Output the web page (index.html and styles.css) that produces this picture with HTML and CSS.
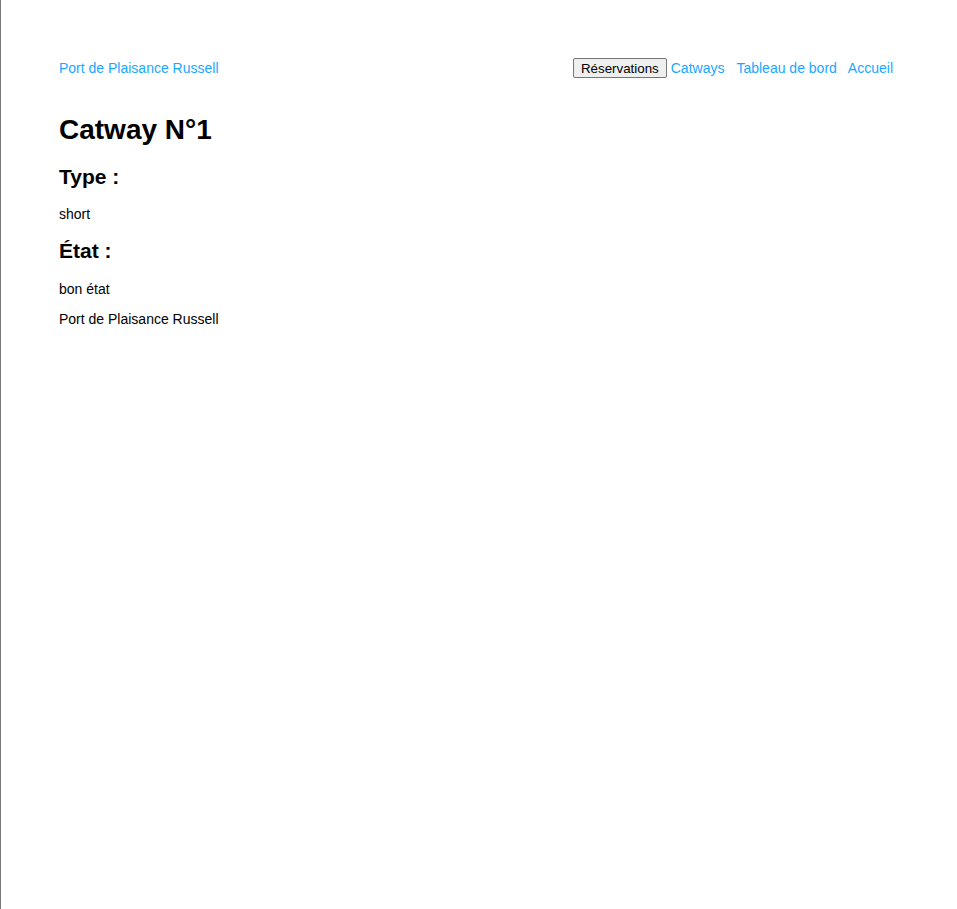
FILE: index.html
```html
<!DOCTYPE html>
<html lang="fr">
<head>
<meta charset="utf-8">
<title>Catway N°1</title>
<link rel="stylesheet" href="styles.css">
</head>
<body>
<div class="page">
  <header class="topbar">
    <a class="brand" href="#">Port de Plaisance Russell</a>
    <nav class="nav">
      <button class="nav-btn" type="button">Réservations</button>
      <a class="nav-link first" href="#">Catways</a>
      <a class="nav-link second" href="#">Tableau de bord</a>
      <a class="nav-link" href="#">Accueil</a>
    </nav>
  </header>
  <main class="content">
    <h1 class="title">Catway N°1</h1>
    <h2 class="label">Type :</h2>
    <p class="value">short</p>
    <h2 class="label">État :</h2>
    <p class="value state">bon état</p>
    <p class="footer">Port de Plaisance Russell</p>
  </main>
</div>
</body>
</html>
```

FILE: styles.css
```css
html, body {
  margin: 0;
  padding: 0;
  height: 100%;
  background: #fff;
}
body {
  border-left: 1px solid #777;
  box-sizing: border-box;
  font-family: "Liberation Sans", Arial, sans-serif;
  font-size: 14px;
  color: #000;
}
.page {
  padding: 0 64px 0 58px;
}
.topbar {
  display: flex;
  justify-content: space-between;
  align-items: center;
  padding-top: 58px;
  height: 20px;
}
.brand, .nav-link {
  color: #1aa7ff;
  text-decoration: none;
  font-size: 14px;
}
.nav {
  display: flex;
  align-items: center;
}
.nav-btn {
  font-family: "Liberation Sans", Arial, sans-serif;
  font-size: 13.33px;
  padding: 1px 7px;
  height: 20px;
  border: 1px solid #767676;
  border-radius: 2px;
  background: #efefef;
  color: #000;
}
.nav-link {
  margin-left: 11px;
}
.nav-link.first {
  margin-left: 4px;
}
.nav-link.second {
  margin-left: 12px;
}
.title {
  font-size: 28px;
  font-weight: bold;
  margin: 36px 0 0;
  line-height: 32px;
}
.label {
  font-size: 21px;
  font-weight: bold;
  margin: 19px 0 0;
  line-height: 24px;
}
.value, .footer {
  margin: 0;
  line-height: 16px;
}
.label + .value {
  margin-top: 17px;
}
.label + .value.state {
  margin-top: 18px;
}
.value + .label {
  margin-top: 17px;
}
.footer {
  margin-top: 14px;
}
```
